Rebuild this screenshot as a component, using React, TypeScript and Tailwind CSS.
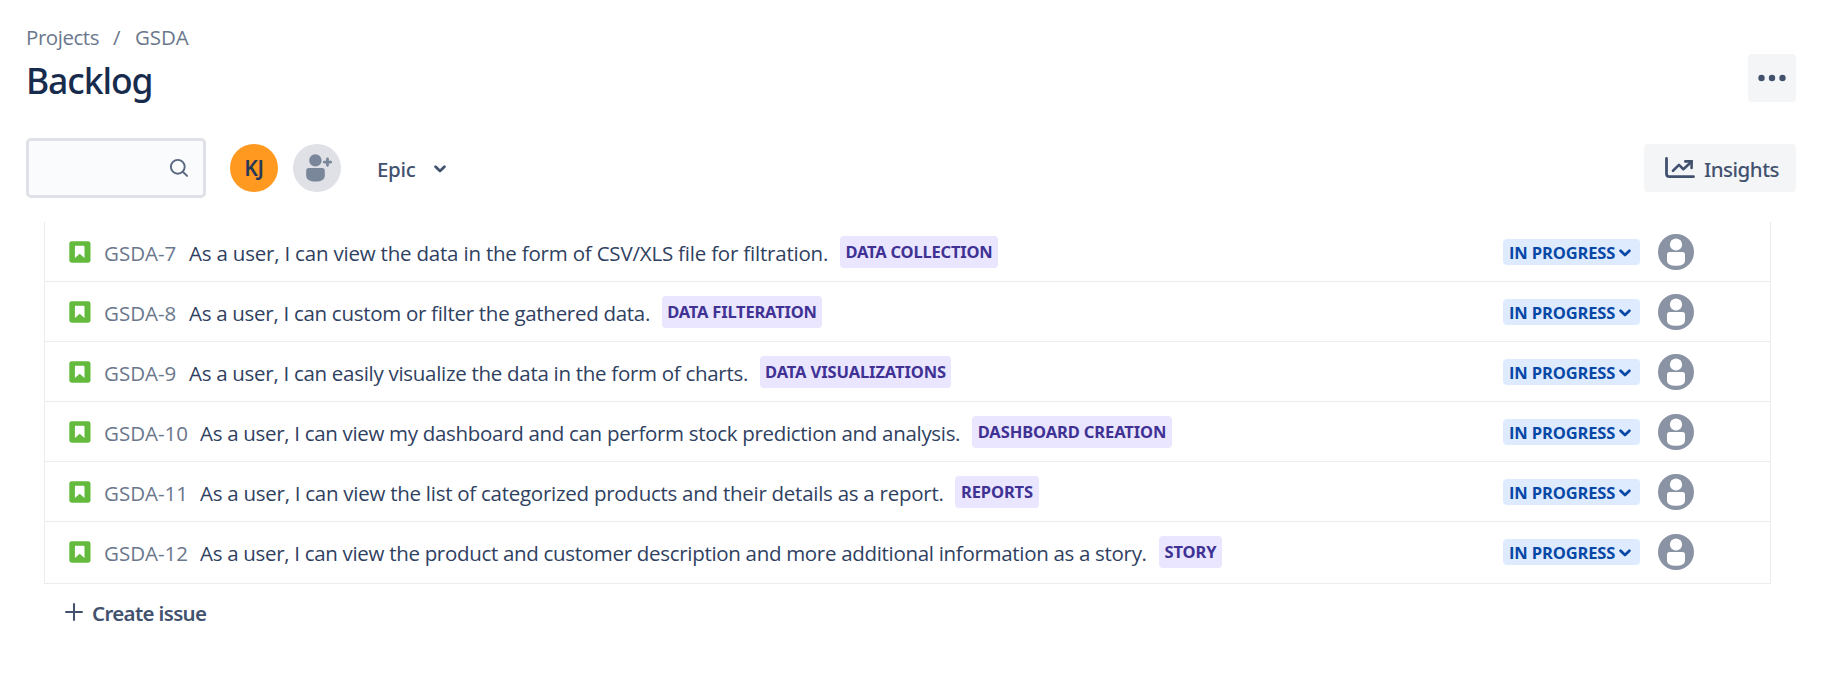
type Issue = {
  id: string;
  summary: string;
  epic: string;
  idClass: string;
  summaryClass: string;
  epicClass: string;
};

const issues: Issue[] = [
  {
    id: "GSDA-7",
    summary: "As a user, I can view the data in the form of CSV/XLS file for filtration.",
    epic: "DATA COLLECTION",
    idClass: "w-[85px]",
    summaryClass: "w-[651px] tracking-[-0.2px]",
    epicClass: "w-[158px] tracking-[-0.2px]",
  },
  {
    id: "GSDA-8",
    summary: "As a user, I can custom or filter the gathered data.",
    epic: "DATA FILTERATION",
    idClass: "w-[85px]",
    summaryClass: "w-[473px] tracking-[-0.29px]",
    epicClass: "w-[160px] tracking-[-0.2px]",
  },
  {
    id: "GSDA-9",
    summary: "As a user, I can easily visualize the data in the form of charts.",
    epic: "DATA VISUALIZATIONS",
    idClass: "w-[85px]",
    summaryClass: "w-[571px] tracking-[-0.29px]",
    epicClass: "w-[191px] tracking-[-0.11px]",
  },
  {
    id: "GSDA-10",
    summary: "As a user, I can view my dashboard and can perform stock prediction and analysis.",
    epic: "DASHBOARD CREATION",
    idClass: "w-[96px]",
    summaryClass: "w-[772px] tracking-[-0.31px]",
    epicClass: "w-[200px] tracking-[-0.11px]",
  },
  {
    id: "GSDA-11",
    summary: "As a user, I can view the list of categorized products and their details as a report.",
    epic: "REPORTS",
    idClass: "w-[96px]",
    summaryClass: "w-[755px] tracking-[-0.263px]",
    epicClass: "w-[84px] tracking-[-0.1px]",
  },
  {
    id: "GSDA-12",
    summary:
      "As a user, I can view the product and customer description and more additional information as a story.",
    epic: "STORY",
    idClass: "w-[96px]",
    summaryClass: "w-[959px] tracking-[-0.308px]",
    epicClass: "w-[63px] tracking-[-0.1px]",
  },
];

function StoryIcon() {
  return (
    <svg className="h-[22px] w-[22px] shrink-0" viewBox="0 0 22 22">
      <rect x="0.3" y="0.3" width="21.2" height="21.4" rx="2.4" fill="#63ba3c" />
      <path d="M6.6 4.8h8c.6 0 .9.4.9.9v11.2l-4.8-4.1-4.8 4.1V5.7c0-.5.2-.9.7-.9z" fill="#fff" />
    </svg>
  );
}

function Chevron({ className }: { className: string }) {
  return (
    <svg className={className} viewBox="0 0 12 8" fill="none" stroke="currentColor" strokeWidth="2.7" strokeLinecap="round" strokeLinejoin="round">
      <path d="M1.6 1.7 6 6 10.4 1.7" />
    </svg>
  );
}

function UnassignedAvatar() {
  return (
    <svg className="ml-[18px] h-9 w-9 shrink-0" viewBox="0 0 36 36">
      <circle cx="18" cy="18" r="18" fill="#8993a4" />
      <circle cx="18" cy="10.5" r="6.1" fill="#fff" />
      <path d="M11.4 18h13.2c1.4 0 2.4 1 2.4 2.4v6c0 3.8-4 5.4-9 5.4s-9-1.6-9-5.4v-6c0-1.4 1-2.4 2.4-2.4z" fill="#fff" />
    </svg>
  );
}

function IssueRow({ issue }: { issue: Issue }) {
  return (
    <li className="flex h-[60px] items-center border-b border-[#ebecf0] pl-6 pr-[76px] last:h-[62px] last:pb-[2px]">
      <StoryIcon />
      <span className={`ml-[13px] shrink-0 whitespace-nowrap pt-[2px] text-[#6b778c] ${issue.idClass}`}>{issue.id}</span>
      <span className={`shrink-0 whitespace-nowrap pt-[2px] text-[#2f4161] ${issue.summaryClass}`}>{issue.summary}</span>
      <span className={`flex h-8 shrink-0 items-center justify-center whitespace-nowrap rounded-[4px] bg-[#eae6ff] font-['Noto_Sans',sans-serif] text-[16.5px] font-bold text-[#403294] ${issue.epicClass}`}>
        {issue.epic}
      </span>
      <button className="ml-auto flex h-[26px] w-[137px] shrink-0 items-center rounded-[4px] bg-[#deebff] pl-[6px] font-['Open_Sans',sans-serif] text-[16.5px] font-bold tracking-[-0.15px] text-[#0747a6]">
        <span className="w-[110px] whitespace-nowrap pt-[2px] text-left">IN PROGRESS</span>
        <Chevron className="mt-[2px] h-2 w-3" />
      </button>
      <UnassignedAvatar />
    </li>
  );
}

export default function App() {
  return (
    <div className="h-[678px] w-[1827px] overflow-hidden bg-white font-['Open_Sans','Noto_Sans',sans-serif] text-[20.5px] leading-[28px] text-[#172b4d]">
      <header className="flex h-[138px] items-start justify-between pl-[26px] pr-[31px] pt-[23px]">
        <div>
          <nav className="flex text-[#6b778c]">
            <span className="w-[87px] tracking-[-0.45px]">Projects</span>
            <span className="w-[22px]">/</span>
            <span className="tracking-[-0.1px]">GSDA</span>
          </nav>
          <h1 className="mt-[7px] font-['Noto_Sans',sans-serif] text-[35.5px] font-medium leading-[44px] tracking-[-1.1px]">Backlog</h1>
        </div>
        <button aria-label="More" className="mt-[31px] flex h-12 w-12 items-center justify-center rounded-[4px] bg-[#f4f5f7]">
          <svg className="h-7 w-7" viewBox="0 0 28 28" fill="#42526e">
            <circle cx="3.5" cy="14" r="3.2" />
            <circle cx="14" cy="14" r="3.2" />
            <circle cx="24.5" cy="14" r="3.2" />
          </svg>
        </button>
      </header>

      <div className="flex h-[60px] items-center pl-[26px] pr-[31px] font-['Noto_Sans',sans-serif] font-medium text-[#42526e]">
        <div className="flex h-[60px] w-[180px] items-center justify-end rounded-[5px] border-[3px] border-[#dfe1e6] bg-[#fafbfc] pr-[14px]">
          <svg className="h-5 w-5" viewBox="0 0 20 20" fill="none" stroke="#5a6780" strokeWidth="1.9" strokeLinecap="round">
            <circle cx="8.8" cy="8.8" r="6.9" />
            <path d="m13.8 13.8 4.3 4.1" />
          </svg>
        </div>
        <span className="ml-6 flex h-12 w-12 items-center justify-center rounded-full bg-[#ff991f] text-[21px] font-semibold tracking-[-0.2px] text-[#253858]">KJ</span>
        <svg className="ml-[15px] h-12 w-12" viewBox="0 0 48 48" fill="#7a869a">
          <circle cx="24" cy="24" r="24" fill="#dfe1e6" />
          <circle cx="22.4" cy="16.4" r="6.2" />
          <path d="M15.6 24h13.8c1.4 0 2.4 1 2.4 2.4v5.4c0 3.6-3.6 5.8-9.3 5.8s-9.3-2.2-9.3-5.8v-5.4c0-1.4 1-2.4 2.4-2.4z" />
          <path d="M34.5 14.9v6.4M31.3 18.1h6.4" stroke="#7a869a" strokeWidth="2.8" strokeLinecap="round" />
        </svg>
        <button className="ml-[36px] flex items-center pt-[2px]">
          <span className="w-[57px] text-left tracking-[-0.3px]">Epic</span>
          <Chevron className="mt-[-1px] h-2 w-3" />
        </button>
        <button className="ml-auto flex h-12 w-[152px] items-center rounded-[4px] bg-[#f4f5f7] pl-[21px]">
          <svg className="h-[22px] w-[30px]" viewBox="0 0 30 22" fill="none" stroke="#42526e" strokeWidth="2.8" strokeLinecap="round" strokeLinejoin="round">
            <path d="M1.5 1.5v15.2q0 3 3 3h24" />
            <path d="M8 13.8 14 7.9l4.4 4.3 8-7.4" strokeWidth="2.6" />
            <path d="M20.3 4.4h6.3v6.6" strokeWidth="2.6" strokeLinejoin="miter" />
          </svg>
          <span className="ml-[9px] pt-[2px] tracking-[-0.5px]">Insights</span>
        </button>
      </div>

      <main className="ml-11 mr-14 mt-6">
        <ul className="border-x border-[#ebecf0]">
          {issues.map((issue) => (
            <IssueRow key={issue.id} issue={issue} />
          ))}
        </ul>
        <button className="mt-3 flex h-8 items-center pl-[21px] font-['Noto_Sans',sans-serif] font-semibold text-[#42526e]">
          <svg className="h-[18px] w-[18px]" viewBox="0 0 18 18" stroke="#42526e" strokeWidth="2" strokeLinecap="round">
            <path d="M9 1v16M1 9h16" />
          </svg>
          <span className="ml-[9px] pt-[2px] tracking-[-0.66px]">Create issue</span>
        </button>
      </main>
    </div>
  );
}
